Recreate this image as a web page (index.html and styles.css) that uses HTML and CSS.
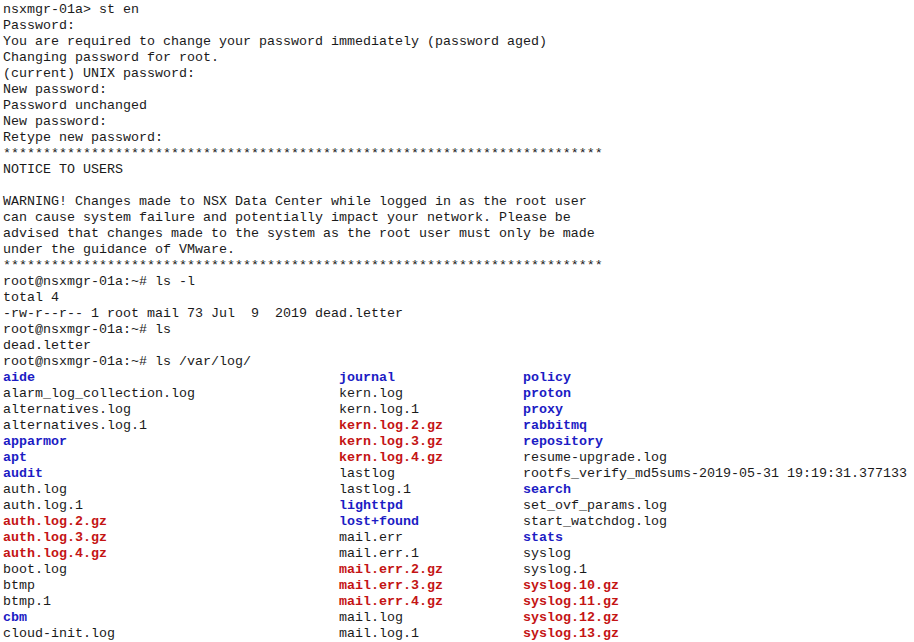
FILE: index.html
```html
<!DOCTYPE html>
<html>
<head>
<meta charset="utf-8">
<link rel="stylesheet" href="styles.css">
</head>
<body>
<div class="term">
<pre class="out">nsxmgr-01a&gt; st en
Password:
You are required to change your password immediately (password aged)
Changing password for root.
(current) UNIX password:
New password:
Password unchanged
New password:
Retype new password:
***************************************************************************
NOTICE TO USERS

WARNING! Changes made to NSX Data Center while logged in as the root user
can cause system failure and potentially impact your network. Please be
advised that changes made to the system as the root user must only be made
under the guidance of VMware.
***************************************************************************
root@nsxmgr-01a:~# ls -l
total 4
-rw-r--r-- 1 root mail 73 Jul  9  2019 dead.letter
root@nsxmgr-01a:~# ls
dead.letter
root@nsxmgr-01a:~# ls /var/log/</pre>
<div class="ls">
<span class="d">aide</span><span class="d">journal</span><span class="d">policy</span>
<span>alarm_log_collection.log</span><span>kern.log</span><span class="d">proton</span>
<span>alternatives.log</span><span>kern.log.1</span><span class="d">proxy</span>
<span>alternatives.log.1</span><span class="z">kern.log.2.gz</span><span class="d">rabbitmq</span>
<span class="d">apparmor</span><span class="z">kern.log.3.gz</span><span class="d">repository</span>
<span class="d">apt</span><span class="z">kern.log.4.gz</span><span>resume-upgrade.log</span>
<span class="d">audit</span><span>lastlog</span><span>rootfs_verify_md5sums-2019-05-31 19:19:31.377133</span>
<span>auth.log</span><span>lastlog.1</span><span class="d">search</span>
<span>auth.log.1</span><span class="d">lighttpd</span><span>set_ovf_params.log</span>
<span class="z">auth.log.2.gz</span><span class="d">lost+found</span><span>start_watchdog.log</span>
<span class="z">auth.log.3.gz</span><span>mail.err</span><span class="d">stats</span>
<span class="z">auth.log.4.gz</span><span>mail.err.1</span><span>syslog</span>
<span>boot.log</span><span class="z">mail.err.2.gz</span><span>syslog.1</span>
<span>btmp</span><span class="z">mail.err.3.gz</span><span class="z">syslog.10.gz</span>
<span>btmp.1</span><span class="z">mail.err.4.gz</span><span class="z">syslog.11.gz</span>
<span class="d">cbm</span><span>mail.log</span><span class="z">syslog.12.gz</span>
<span>cloud-init.log</span><span>mail.log.1</span><span class="z">syslog.13.gz</span>
</div>
</div>
</body>
</html>
```
FILE: styles.css
```css
html, body {
  margin: 0;
  padding: 0;
  background: #ffffff;
}
.term {
  padding: 2px 0 0 3px;
  font-family: "Liberation Mono", "Courier New", monospace;
  font-size: 13.333px;
  line-height: 16px;
  color: #1a1a1a;
  overflow: hidden;
  height: 640px;
}
.out {
  margin: 0;
  font: inherit;
  white-space: pre;
}
.ls {
  display: grid;
  grid-template-columns: 336px 184px auto;
  white-space: pre;
}
.ls span {
  display: block;
  height: 16px;
}
.ls .d {
  color: #1c1cc4;
  font-weight: bold;
}
.ls .z {
  color: #c41414;
  font-weight: bold;
}
```
